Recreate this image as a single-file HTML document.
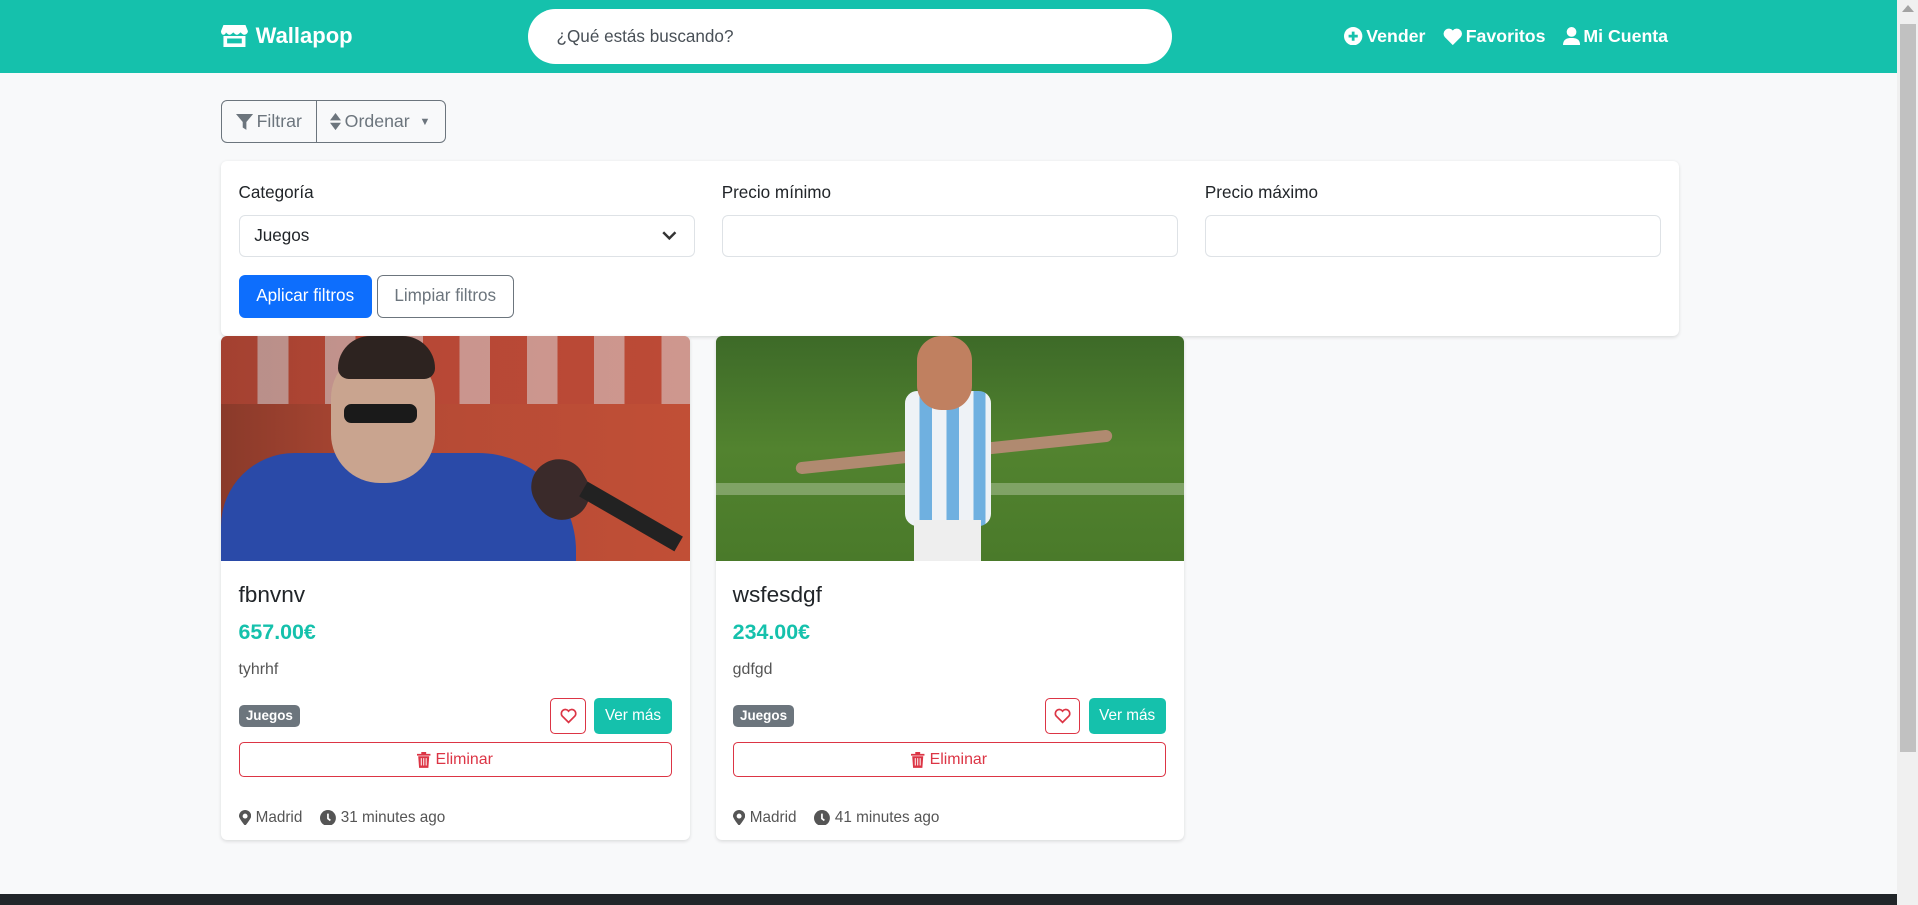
<!DOCTYPE html>
<html><head><meta charset="utf-8"><style>
html,body{margin:0;padding:0;}
body{width:1568px;height:740px;zoom:1.22321;background:#f8f9fa;font-family:"Liberation Sans",sans-serif;color:#212529;font-size:13px;position:relative;overflow:hidden}
.abs{position:absolute}
.nav{left:0;top:0;width:1551px;height:60px;background:#15c1ac}
.scroll{left:1551px;top:0;width:17px;height:740px;background:#f0f0f0}
.thumb{left:1553px;top:20px;width:13px;height:595px;background:#c1c1c1}
.brand{left:181px;top:19px;color:#fff;font-weight:bold;font-size:18px;display:flex;align-items:center;gap:6px}
.search{left:432px;top:7px;width:526px;height:45px;background:#fff;border-radius:23px;box-sizing:border-box;padding-left:23px;line-height:45px;font-size:14px;color:#495057}
.nlinks{left:1099px;top:21px;color:#fff;font-weight:bold;font-size:14.5px;display:flex;gap:14px;align-items:center}
.nlinks span{display:flex;align-items:center;gap:3px}
.btngrp{left:181px;top:82px;width:184px;height:35px;border:1px solid #6c757d;border-radius:5px;box-sizing:border-box;display:flex;color:#6c757d;font-size:14.5px}
.btngrp div{display:flex;align-items:center;gap:3px;padding-left:11px}
.fcard{left:181px;top:132px;width:1192px;height:143px;background:#fff;border-radius:5px;box-shadow:0 1px 3px rgba(0,0,0,.12)}
.lbl{top:150px;font-size:14px}
.inp{top:176px;width:373px;height:34px;border:1px solid #dee2e6;border-radius:5px;box-sizing:border-box;background:#fff;font-size:14px;line-height:32px;padding-left:12px}
.b1{left:195px;top:225px;width:109px;height:35px;background:#0d6efd;color:#fff;border-radius:5px;font-size:14px;text-align:center;line-height:35px}
.b2{left:308px;top:225px;width:112px;height:35px;border:1px solid #6c757d;color:#6c757d;border-radius:5px;box-sizing:border-box;font-size:14px;text-align:center;line-height:33px}
.card{top:275px;width:383px;height:412px;background:#fff;border-radius:5px;box-shadow:0 1px 3px rgba(0,0,0,.12);overflow:hidden}
.img{left:0;top:0;width:383px;height:184px}
.title{left:14px;top:201px;font-size:18.5px;font-weight:500}
.price{left:14px;top:232px;font-size:17.5px;font-weight:bold;color:#15c1ac}
.desc{left:14px;top:265px;font-size:13px;color:#555}
.badge{left:14px;top:301px;background:#6c757d;color:#fff;font-weight:bold;font-size:11px;border-radius:4px;padding:3px 6px}
.heart{left:269px;top:296px;width:29px;height:29px;border:1px solid #dc3545;border-radius:4px;box-sizing:border-box;display:flex;align-items:center;justify-content:center}
.ver{left:305px;top:296px;width:63px;height:29px;background:#15c1ac;color:#fff;border-radius:4px;font-size:12.5px;text-align:center;line-height:29px}
.del{left:14px;top:332px;width:354px;height:28px;border:1px solid #dc3545;border-radius:4px;box-sizing:border-box;color:#dc3545;font-size:13px;display:flex;align-items:center;justify-content:center;gap:4px}
.meta{left:14px;top:386px;font-size:12.5px;color:#555;display:flex;align-items:center;gap:4px}
.foot{left:0;top:731px;width:1551px;height:9px;background:#212529}
</style></head><body>
<div class="abs nav"></div>
<div class="abs brand"><svg width="22" height="18" viewBox="0 0 22 18"><path d="M2 0h18l2 5c0 2-2 3-3 3s-2-1-3-2c-1 1-2 2-3 2s-2-1-3-2c-1 1-2 2-3 2s-2-1-3-2C4 7 3 8 2 8S0 7 0 5z" fill="#fff"/><path d="M2 9h18v9H2z M5 11v4h12v-4z" fill="#fff" fill-rule="evenodd"/></svg>Wallapop</div>
<div class="abs search">¿Qué estás buscando?</div>
<div class="abs nlinks">
<span><svg width="15" height="15" viewBox="0 0 16 16"><circle cx="8" cy="8" r="8" fill="#fff"/><path d="M8 4v8M4 8h8" stroke="#15c1ac" stroke-width="2.4"/></svg>Vender</span>
<span><svg width="16" height="14" viewBox="0 0 16 14"><path d="M8 14L1.5 7.5A4 4 0 0 1 8 2a4 4 0 0 1 6.5 5.5z" fill="#fff"/></svg>Favoritos</span>
<span><svg width="14" height="15" viewBox="0 0 14 15"><circle cx="7" cy="4" r="4" fill="#fff"/><path d="M0 15c0-5 3-6 7-6s7 1 7 6z" fill="#fff"/></svg>Mi Cuenta</span>
</div>
<div class="abs btngrp"><div style="width:77px;border-right:1px solid #6c757d;box-sizing:border-box"><svg width="14" height="13" viewBox="0 0 14 13"><path d="M0 0h14L8.5 6.5V13L5.5 11V6.5z" fill="#6c757d"/></svg>Filtrar</div><div><svg width="9" height="14" viewBox="0 0 9 14"><path d="M4.5 0L9 6H0zM4.5 14L0 8h9z" fill="#6c757d"/></svg>Ordenar <span style="font-size:9px;margin-left:5px">▼</span></div></div>
<div class="abs fcard"></div>
<div class="abs lbl" style="left:195px">Categoría</div>
<div class="abs lbl" style="left:590px">Precio mínimo</div>
<div class="abs lbl" style="left:985px">Precio máximo</div>
<div class="abs inp" style="left:195px">Juegos<svg style="position:absolute;right:14px;top:12px" width="12" height="8" viewBox="0 0 12 8"><path d="M1 1l5 5 5-5" stroke="#333" stroke-width="2" fill="none"/></svg></div>
<div class="abs inp" style="left:590px"></div>
<div class="abs inp" style="left:985px"></div>
<div class="abs b1">Aplicar filtros</div>
<div class="abs b2">Limpiar filtros</div>

<div class="abs card" style="left:181px">
<div class="abs img" style="background:linear-gradient(90deg,#8a3a2a 0%,#b54a35 40%,#c14f36 100%)">
<div class="abs" style="left:0;top:0;width:383px;height:55px;background:repeating-linear-gradient(90deg,#b84636 0 30px,#d9d2d6 30px 55px);opacity:.55"></div>
<div class="abs" style="left:0;top:95px;width:290px;height:89px;background:#2a4aa8;border-radius:60px 80px 0 0"></div>
<div class="abs" style="left:90px;top:10px;width:85px;height:110px;background:#c9a48f;border-radius:40px"></div>
<div class="abs" style="left:95px;top:0;width:80px;height:35px;background:#2d2320;border-radius:30px 30px 10px 10px"></div>
<div class="abs" style="left:100px;top:55px;width:60px;height:16px;background:#1a1a1a;border-radius:6px"></div>
<div class="abs" style="left:255px;top:100px;width:45px;height:50px;background:#3a2a2a;border-radius:22px;transform:rotate(-30deg)"></div>
<div class="abs" style="left:290px;top:140px;width:90px;height:14px;background:#222;transform:rotate(30deg)"></div>
</div>
<div class="abs title">fbnvnv</div>
<div class="abs price">657.00€</div>
<div class="abs desc">tyhrhf</div>
<div class="abs badge">Juegos</div>
<div class="abs heart"><svg width="14" height="13" viewBox="0 0 16 14"><path d="M8 13L2 7A3.6 3.6 0 0 1 8 2.5 3.6 3.6 0 0 1 14 7z" fill="none" stroke="#dc3545" stroke-width="1.6"/></svg></div>
<div class="abs ver">Ver más</div>
<div class="abs del"><svg width="11" height="13" viewBox="0 0 11 13"><path d="M0 1.5h11v1.5H0zM3.5 0h4v1.5h-4zM1 3.5h9L9.3 13H1.7z" fill="#dc3545"/><path d="M3.5 5v6M5.5 5v6M7.5 5v6" stroke="#fff" stroke-width=".8"/></svg>Eliminar</div>
<div class="abs meta"><svg width="10" height="13" viewBox="0 0 10 13"><path d="M5 13C5 13 0 7 0 5a5 5 0 0 1 10 0c0 2-5 8-5 8z" fill="#555"/><circle cx="5" cy="5" r="2" fill="#fff"/></svg>Madrid&nbsp;&nbsp;&nbsp;<svg width="13" height="13" viewBox="0 0 13 13"><circle cx="6.5" cy="6.5" r="6.5" fill="#555"/><path d="M6.5 3v4l2 1.5" stroke="#fff" stroke-width="1.4" fill="none"/></svg>31 minutes ago</div>
</div>

<div class="abs card" style="left:585px">
<div class="abs img" style="background:linear-gradient(180deg,#3d6a28 0%,#52832f 50%,#4a7a2a 100%)">
<div class="abs" style="left:0;top:120px;width:383px;height:10px;background:rgba(220,230,210,.35)"></div>
<div class="abs" style="left:65px;top:90px;width:260px;height:10px;background:#b08a70;border-radius:5px;transform:rotate(-6deg)"></div>
<div class="abs" style="left:155px;top:45px;width:70px;height:110px;background:repeating-linear-gradient(90deg,#eef2f6 0 12px,#6fb0e0 12px 22px);border-radius:10px"></div>
<div class="abs" style="left:162px;top:150px;width:55px;height:34px;background:#eee"></div>
<div class="abs" style="left:165px;top:0;width:45px;height:60px;background:#c08060;border-radius:20px"></div>
</div>
<div class="abs title">wsfesdgf</div>
<div class="abs price">234.00€</div>
<div class="abs desc">gdfgd</div>
<div class="abs badge">Juegos</div>
<div class="abs heart"><svg width="14" height="13" viewBox="0 0 16 14"><path d="M8 13L2 7A3.6 3.6 0 0 1 8 2.5 3.6 3.6 0 0 1 14 7z" fill="none" stroke="#dc3545" stroke-width="1.6"/></svg></div>
<div class="abs ver">Ver más</div>
<div class="abs del"><svg width="11" height="13" viewBox="0 0 11 13"><path d="M0 1.5h11v1.5H0zM3.5 0h4v1.5h-4zM1 3.5h9L9.3 13H1.7z" fill="#dc3545"/><path d="M3.5 5v6M5.5 5v6M7.5 5v6" stroke="#fff" stroke-width=".8"/></svg>Eliminar</div>
<div class="abs meta"><svg width="10" height="13" viewBox="0 0 10 13"><path d="M5 13C5 13 0 7 0 5a5 5 0 0 1 10 0c0 2-5 8-5 8z" fill="#555"/><circle cx="5" cy="5" r="2" fill="#fff"/></svg>Madrid&nbsp;&nbsp;&nbsp;<svg width="13" height="13" viewBox="0 0 13 13"><circle cx="6.5" cy="6.5" r="6.5" fill="#555"/><path d="M6.5 3v4l2 1.5" stroke="#fff" stroke-width="1.4" fill="none"/></svg>41 minutes ago</div>
</div>

<div class="abs foot"></div>
<div class="abs scroll"></div>
<div class="abs thumb"></div>
<div class="abs" style="left:1555px;top:4px;width:0;height:0;border-left:5px solid transparent;border-right:5px solid transparent;border-bottom:6px solid #a3a3a3"></div>
</body></html>
